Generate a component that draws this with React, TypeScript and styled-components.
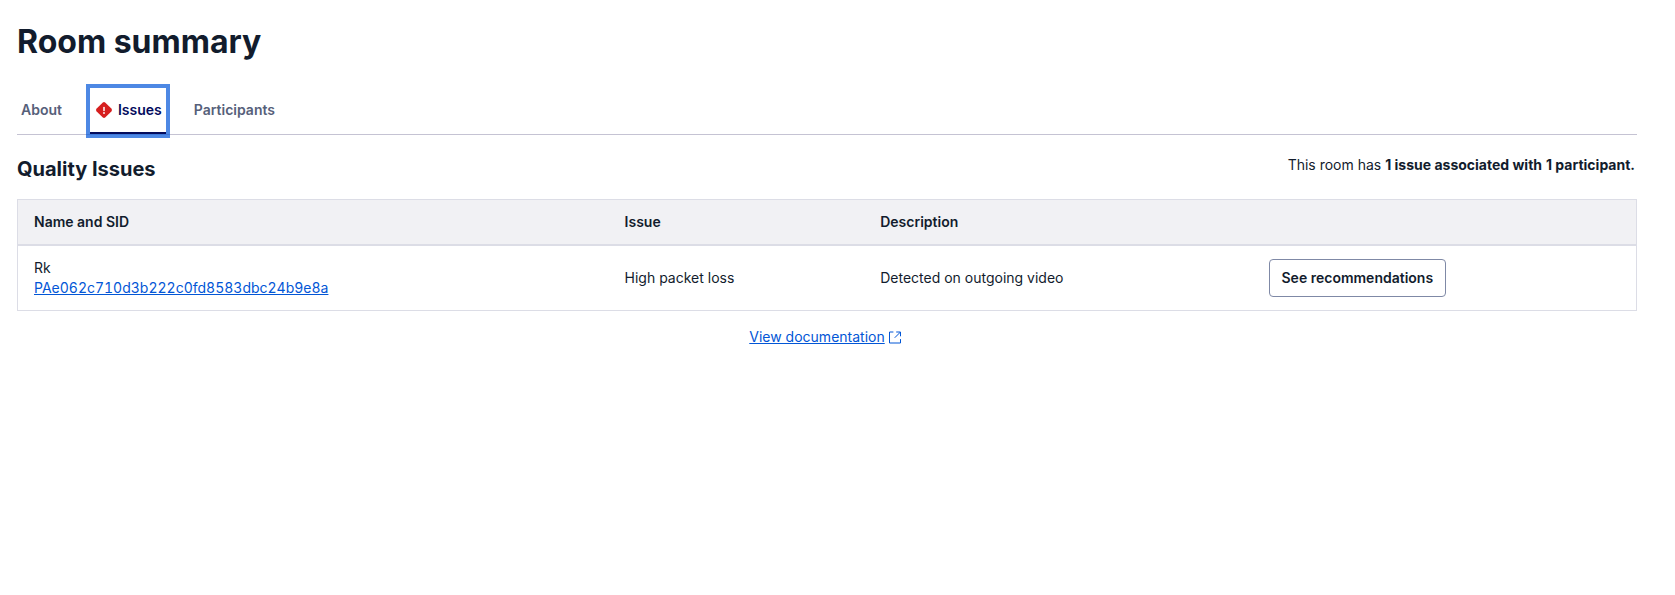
import React from "react";
import styled, { createGlobalStyle } from "styled-components";

const color = {
  text: "#121c2d",
  weak: "#56607a",
  selected: "#030b5d",
  link: "#0256d6",
  error: "#d61f1f",
  border: "#dcdde6",
};

const GlobalStyle = createGlobalStyle`
  *, *::before, *::after { box-sizing: border-box; }
  body {
    margin: 0;
    background: #ffffff;
    color: ${color.text};
    font-family: Inter, "Liberation Sans", sans-serif;
    font-size: 14px;
    line-height: 20px;
  }
`;

const Page = styled.main`
  padding: 20px 38px 16px 17px;
`;

const Title = styled.h1`
  margin: 0 0 24px;
  font-size: 32px;
  line-height: 44px;
  font-weight: 700;
`;

const TabList = styled.div`
  display: flex;
  gap: 24px;
  border-bottom: 1px solid #c5c3d3;
`;

const Tab = styled.button<{ $selected?: boolean }>`
  display: flex;
  align-items: center;
  gap: 4px;
  padding: 12px 4px;
  border: 0;
  border-bottom: 2px solid ${(p) => (p.$selected ? color.selected : "transparent")};
  background: transparent;
  color: ${(p) => (p.$selected ? color.selected : color.weak)};
  font: inherit;
  font-weight: 600;
  cursor: pointer;
  outline: none;
  box-shadow: ${(p) => (p.$selected ? "0 0 0 4px rgba(2, 86, 217, 0.7)" : "none")};
`;

const Icon = styled.svg`
  display: block;
  width: 20px;
  height: 20px;
  flex: none;
`;

const SectionHeader = styled.div`
  display: flex;
  justify-content: space-between;
  align-items: flex-start;
  margin: 20px 0 16px;
`;

const SectionTitle = styled.h2`
  margin: 0;
  font-size: 20px;
  line-height: 28px;
  font-weight: 700;
`;

const Summary = styled.p`
  display: flex;
  gap: 4px;
  margin: 0;
  padding-right: 2px;

  strong {
    font-weight: 700;
  }
`;

const Table = styled.table`
  width: 100%;
  table-layout: fixed;
  border: 1px solid ${color.border};
  border-collapse: separate;
  border-spacing: 0;
`;

const Column = styled.col<{ $share: number }>`
  width: ${(p) => p.$share}%;
`;

const HeaderCell = styled.th`
  height: 46px;
  padding: 12px 16px;
  border-bottom: 2px solid ${color.border};
  background: #f1f1f4;
  text-align: left;
  font-weight: 600;
`;

const Cell = styled.td`
  height: 64px;
  padding: 12px 16px;
  vertical-align: middle;
`;

const Link = styled.a`
  color: ${color.link};
  text-decoration: underline;
`;

const SidLink = styled(Link)`
  font-variant-numeric: tabular-nums;
`;

const Button = styled.button`
  display: block;
  padding: 8px 12px;
  border: 1px solid #7f89a6;
  border-radius: 4px;
  background: #ffffff;
  color: ${color.text};
  font: inherit;
  font-weight: 600;
  cursor: pointer;
`;

const Footer = styled.footer`
  display: flex;
  justify-content: center;
  margin-top: 16px;
`;

const DocsLink = styled(Link)`
  display: flex;
  text-decoration: none;

  span {
    text-decoration: underline;
  }
`;

function ErrorIcon() {
  return (
    <Icon viewBox="0 0 20 20" aria-hidden="true">
      <rect x="3.8" y="3.8" width="12.4" height="12.4" rx="2" fill={color.error} transform="rotate(45 10 10)" />
      <path d="M10 7.4v3.2" stroke="#fff" strokeWidth="1.5" strokeLinecap="round" />
      <circle cx="10" cy="13" r="0.9" fill="#fff" />
    </Icon>
  );
}

function ExternalIcon() {
  return (
    <Icon viewBox="0 0 20 20" fill="none" stroke={color.link} strokeLinecap="round" strokeLinejoin="round" aria-hidden="true">
      <path d="M8 5H4.5v11h11v-3.5M11.6 5h3.9v3.9M15.2 5.3l-5.2 5.2" />
    </Icon>
  );
}

export default function App() {
  return (
    <>
      <GlobalStyle />
      <Page>
        <Title>Room summary</Title>
        <TabList role="tablist" aria-label="Room summary">
          <Tab type="button" role="tab" aria-selected="false">About</Tab>
          <Tab type="button" role="tab" aria-selected="true" $selected>
            <ErrorIcon />
            Issues
          </Tab>
          <Tab type="button" role="tab" aria-selected="false">Participants</Tab>
        </TabList>
        <section>
          <SectionHeader>
            <SectionTitle>Quality Issues</SectionTitle>
            <Summary>
              <span>This room has</span>
              <strong>1 issue associated with</strong>
              <strong>1 participant.</strong>
            </Summary>
          </SectionHeader>
          <Table>
            <colgroup>
              <Column $share={36.5} />
              <Column $share={15.8} />
              <Column $share={24} />
              <Column $share={23.7} />
            </colgroup>
            <thead>
              <tr>
                <HeaderCell scope="col">Name and SID</HeaderCell>
                <HeaderCell scope="col">Issue</HeaderCell>
                <HeaderCell scope="col">Description</HeaderCell>
                <HeaderCell scope="col" aria-label="Actions" />
              </tr>
            </thead>
            <tbody>
              <tr>
                <Cell>
                  <div>Rk</div>
                  <SidLink href="#participant">PAe062c710d3b222c0fd8583dbc24b9e8a</SidLink>
                </Cell>
                <Cell>High packet loss</Cell>
                <Cell>Detected on outgoing video</Cell>
                <Cell>
                  <Button type="button">See recommendations</Button>
                </Cell>
              </tr>
            </tbody>
          </Table>
          <Footer>
            <DocsLink href="#documentation">
              <span>View documentation</span>
              <ExternalIcon />
            </DocsLink>
          </Footer>
        </section>
      </Page>
    </>
  );
}
